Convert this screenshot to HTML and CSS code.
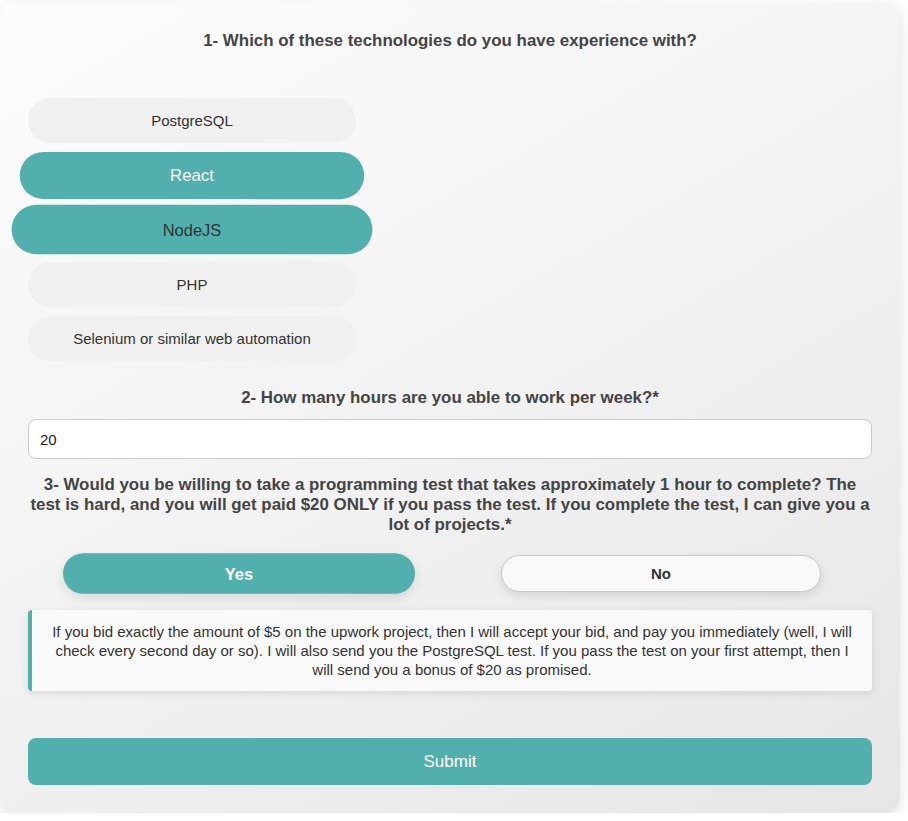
FILE: index.html
```html
<!DOCTYPE html>
<html>
<head>
<meta charset="utf-8">
<link rel="stylesheet" href="styles.css">
</head>
<body>
<div class="card">
  <h2 class="q q1">1- Which of these technologies do you have experience with?</h2>
  <div class="options">
    <div class="opt">PostgreSQL</div>
    <div class="opt selected">React</div>
    <div class="opt hover">NodeJS</div>
    <div class="opt">PHP</div>
    <div class="opt">Selenium or similar web automation</div>
  </div>
  <h3 class="q q2">2- How many hours are you able to work per week?*</h3>
  <input class="hours" type="text" value="20">
  <h3 class="q q3">3- Would you be willing to take a programming test that takes approximately 1 hour to complete? The test is hard, and you will get paid $20 ONLY if you pass the test. If you complete the test, I can give you a lot of projects.*</h3>
  <div class="yesno">
    <div class="yn yes">Yes</div>
    <div class="yn no">No</div>
  </div>
  <div class="info">If you bid exactly the amount of $5 on the upwork project, then I will accept your bid, and pay you immediately (well, I will check every second day or so). I will also send you the PostgreSQL test. If you pass the test on your first attempt, then I will send you a bonus of $20 as promised.</div>
  <div class="submit">Submit</div>
</div>
</body>
</html>
```
FILE: styles.css
```css
html, body { margin: 0; padding: 0; background: #ffffff; }
body { font-family: "Liberation Sans", Arial, sans-serif; padding-top: 3px; }
.card {
  width: 900px;
  box-sizing: border-box;
  padding: 28px 28px 28px 28px;
  border-radius: 15px;
  background: linear-gradient(150deg, #fcfcfc 0%, #f3f3f3 45%, #e6e6e6 100%);
  box-shadow: 0 4px 16px rgba(0,0,0,0.12);
}
.q { margin: 0; text-align: center; color: #444; font-weight: bold; }
.q1 { font-size: 16.9px; line-height: 20px; margin-bottom: 47px; }
.options { display: flex; flex-direction: column; gap: 9.5px; align-items: flex-start; }
.opt {
  width: 328px; height: 45px; box-sizing: border-box;
  border-radius: 23px; background: #f0f0f0; color: #333;
  display: flex; align-items: center; justify-content: center;
  font-size: 15px;
}
.opt.selected { background: #51afad; color: #fff; transform: scale(1.05); font-size: 16px; }
.opt.hover { background: #51afad; color: #333; transform: scale(1.1); font-size: 15px; }
.q2 { font-size: 16.9px; line-height: 20px; margin-top: 27px; margin-bottom: 11px; }
.hours {
  display: block; width: 100%; box-sizing: border-box; height: 40px;
  border: 1px solid #ccc; border-radius: 8px; background: #fff;
  padding: 0 11px; font-family: "Liberation Sans", Arial, sans-serif;
  font-size: 15px; color: #222; margin: 0;
}
.q3 { font-size: 16.9px; line-height: 20px; margin-top: 16px; margin-bottom: 20px; }
.yesno { display: flex; justify-content: space-around; }
.yn {
  width: 320px; height: 37px; box-sizing: border-box; border-radius: 19px;
  display: flex; align-items: center; justify-content: center;
  font-weight: bold; font-size: 15px;
  box-shadow: 0 4px 10px rgba(0,0,0,0.1);
}
.yes { background: #51afad; color: #fff; transform: scale(1.1); }
.no { background: #f9f9f9; color: #333; border: 1px solid #c8c8c8; }
.info {
  margin-top: 18px;
  background: #f9f9f9; border-left: 4px solid #51afad; border-radius: 4px;
  box-shadow: 0 2px 8px rgba(0,0,0,0.1);
  padding: 12px 16px; text-align: center; color: #333;
  font-size: 15px; line-height: 19px;
}
.submit {
  margin-top: 47px; height: 47px; border-radius: 8px; background: #51afad; color: #fff;
  display: flex; align-items: center; justify-content: center; font-size: 17px;
}
```
